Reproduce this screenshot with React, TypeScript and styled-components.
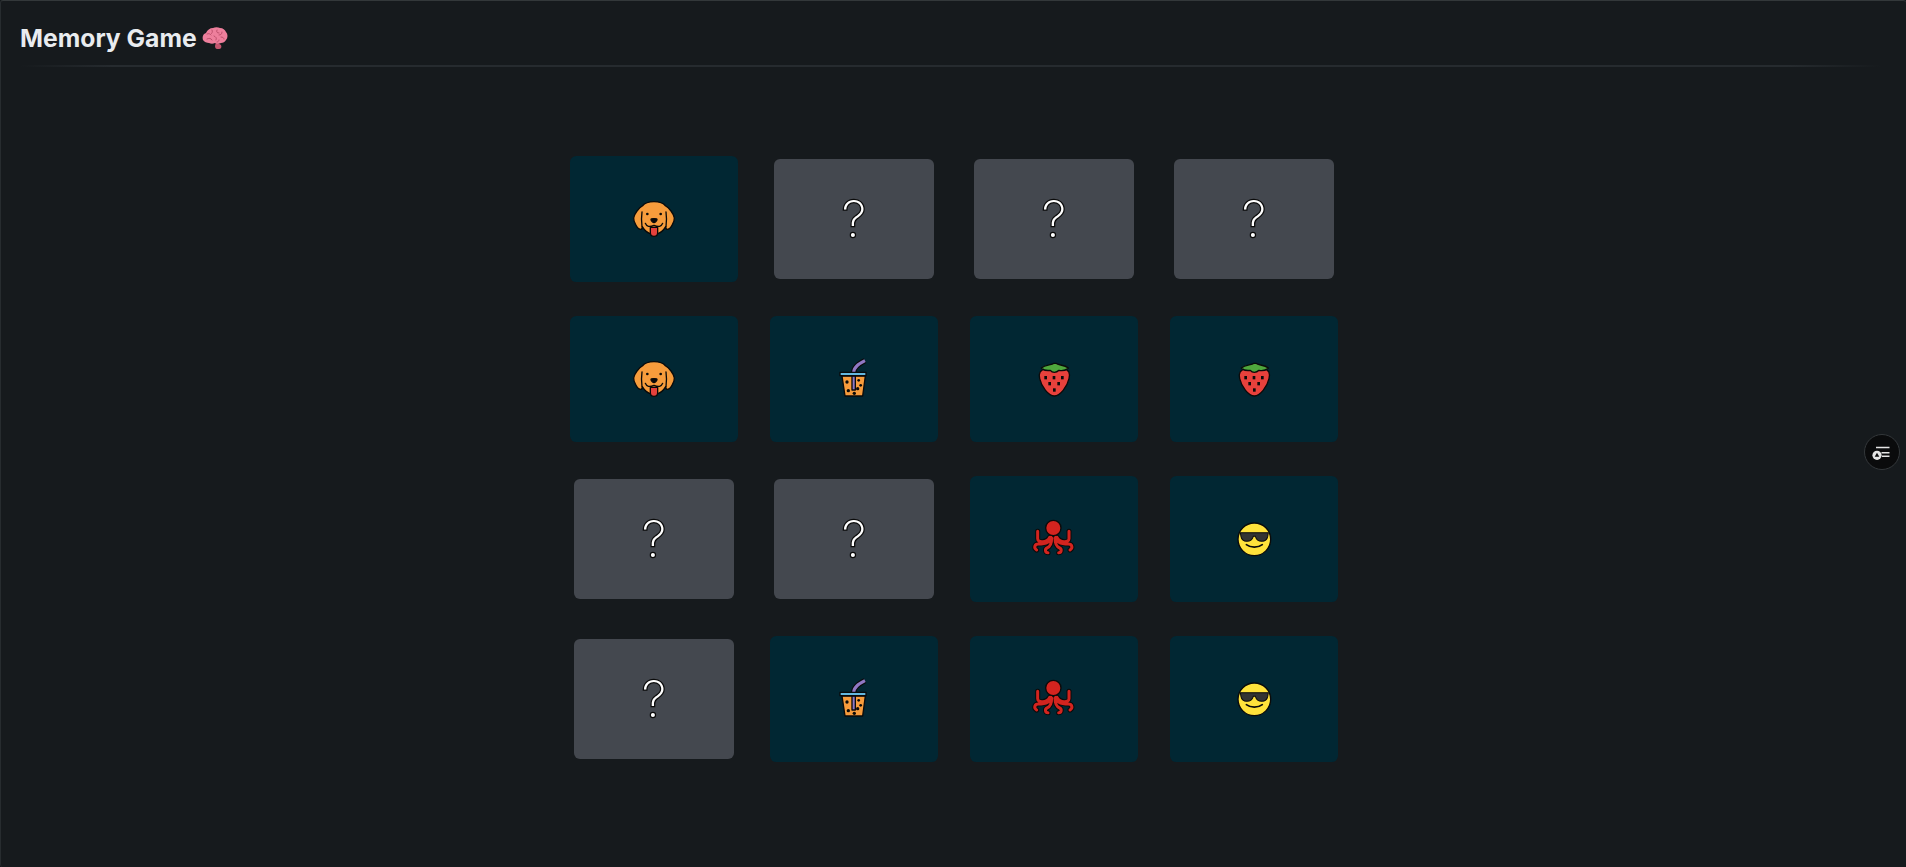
import React from 'react'
import styled, { createGlobalStyle } from 'styled-components'

const GlobalStyle = createGlobalStyle`
  html, body {
    margin: 0;
    padding: 0;
    background: #161a1d;
  }
`

const Page = styled.div`
  box-sizing: border-box;
  height: 867px;
  overflow: hidden;
  background: #161a1d;
  border-top: 1px solid #33383a;
  border-left: 1px solid #272c2f;
  border-radius: 3px;
  padding: 0 25px 0 19px;
  font-family: Inter, "Liberation Sans", sans-serif;
`

const Header = styled.div`
  display: flex;
  align-items: center;
  gap: 5px;
  height: 64px;
  padding-top: 9px;
  box-sizing: border-box;
`

const Title = styled.h1`
  margin: 0;
  font-size: 24.7px;
  line-height: 32px;
  font-weight: 700;
  color: #e9ecef;
`

const Divider = styled.div`
  height: 2px;
  background: linear-gradient(90deg, transparent 0, #262b2f 5%, #262b2f 95%, transparent 100%);
`

const Board = styled.div`
  display: grid;
  grid-template-columns: repeat(4, 160px);
  grid-auto-rows: 120px;
  gap: 40px;
  justify-content: center;
  margin: 92px 0 0 7px;
`

const Card = styled.div<{ $open: boolean }>`
  display: flex;
  align-items: center;
  justify-content: center;
  border-radius: 6px;
  background: ${p => (p.$open ? '#012733' : '#44484f')};
  transform: ${p => (p.$open ? 'scale(1.05)' : 'none')};
`

const Question = styled.span`
  font-size: 50px;
  line-height: 1;
  font-weight: 200;
  color: #fff;
  -webkit-text-stroke: 2.5px #0b0b0b;
  paint-order: stroke fill;
`

const IconBox = styled.svg`
  display: block;
  width: 60px;
  height: 60px;
  transform: scale(0.9524);
`

const FloatButton = styled.button`
  position: fixed;
  left: 1864px;
  top: 434px;
  width: 36px;
  height: 36px;
  padding: 0;
  display: flex;
  align-items: center;
  justify-content: center;
  border-radius: 50%;
  border: 1px solid #34383b;
  background: #0a0b0c;
`

const Dog = () => (
  <IconBox viewBox="12 -3 180 180">
    <g stroke="#0a0a0a" strokeWidth="4" strokeLinejoin="round" strokeLinecap="round">
      <path fill="#f79c3c" d="M102 35c-16 0-28 4-35 13-9 4-25 24-26 36-1 12 12 34 20 34 4 0 6-4 6-8 6 10 14 18 22 20h26c8-2 16-10 22-20 0 4 2 8 6 8 8 0 21-22 20-34-1-12-17-32-26-36-7-9-19-13-35-13z" />
      <path fill="none" d="M66 66c-2 14-2 30 0 44M138 66c2 14 2 30 0 44" />
      <path fill="none" d="M76 100c4 10 12 12 26 6 14 6 22 4 26-6" />
      <path fill="#e5413c" d="M91 112h22v16c0 7-5 11-11 11s-11-4-11-11z" />
      <path fill="#0a0a0a" d="M93 88c0-3 18-3 18 0 0 5-6 10-9 10s-9-5-9-10z" />
    </g>
    <circle cx="82" cy="72" r="4" fill="#0a0a0a" />
    <circle cx="122" cy="72" r="4" fill="#0a0a0a" />
  </IconBox>
)

const Cup = () => (
  <IconBox viewBox="-3 -3 180 180">
    <path fill="none" stroke="#0a0a0a" strokeWidth="16" d="M86 68c0-16 12-25 34-36" />
    <path fill="none" stroke="#8f78c4" strokeWidth="9" d="M86 68c0-16 12-25 34-36" />
    <g stroke="#0a0a0a" strokeWidth="4" strokeLinejoin="round">
      <path fill="#f79c3c" d="M51 78h70l-8 60H60z" />
      <path fill="#8f78c4" d="M81 78h10v42H81z" />
      <path fill="#62b8e0" d="M45 67h78v10H45z" />
    </g>
    <g fill="#0a0a0a">
      <circle cx="66" cy="96" r="5" /><circle cx="101" cy="91" r="4" />
      <circle cx="70" cy="122" r="5" /><circle cx="98" cy="116" r="5" />
      <circle cx="107" cy="106" r="4" /><circle cx="88" cy="130" r="5" />
    </g>
  </IconBox>
)

const Berry = () => (
  <IconBox viewBox="-3 -3 180 180">
    <path stroke="#0a0a0a" strokeWidth="4" fill="#e8413c" d="M62 58h54c16 0 20 12 16 28-5 24-27 52-44 52-17 0-39-28-44-52-4-16 2-28 18-28z" />
    <path stroke="#0a0a0a" strokeWidth="4" strokeLinejoin="round" fill="#4fa83d" d="M87 40c-8 6-26 4-38 14 8 8 20 8 27 7 3 4 8 6 12 6s10-2 14-6c6 1 20 1 28-7-12-10-30-8-37-14z" />
    <g fill="#0a0a0a">
      <rect x="58" y="78" width="8" height="10" /><rect x="83" y="78" width="8" height="10" /><rect x="108" y="78" width="8" height="10" />
      <rect x="70" y="96" width="8" height="10" /><rect x="97" y="96" width="8" height="10" />
      <rect x="84" y="115" width="8" height="10" />
    </g>
  </IconBox>
)

const tentacles = 'M38 64v22c0 14 28 12 36-4M132 64v22c0 14-28 12-36-4M78 82c-2 18-24 20-38 20-11 0-15 12-5 18M92 82c2 18 24 20 38 20 11 0 15 12 5 18M80 84c0 18-4 26-14 30-7 3-6 14 3 14M90 84c0 18 4 26 14 30 7 3 6 14-3 14'

const Octopus = () => (
  <IconBox viewBox="-3 -3 180 180">
    <g fill="none" strokeLinecap="round" strokeLinejoin="round">
      <path stroke="#0a0a0a" strokeWidth="15" d={tentacles} />
      <path stroke="#d3241f" strokeWidth="9" d={tentacles} />
    </g>
    <circle cx="85" cy="54" r="23" fill="#d3241f" stroke="#0a0a0a" strokeWidth="4" />
  </IconBox>
)

const Cool = () => (
  <IconBox viewBox="-3 -3 180 180">
    <circle cx="88" cy="88" r="49" fill="#ffe23b" stroke="#0a0a0a" strokeWidth="4" />
    <path fill="#333" stroke="#0a0a0a" strokeWidth="3" d="M46 68h84l-2 12c-2 10-8 14-18 14s-16-5-19-15h-6c-3 10-9 15-19 15s-16-4-18-14z" />
    <path fill="none" stroke="#0a0a0a" strokeWidth="5" strokeLinecap="round" d="M64 104c13 10 35 10 48 0" />
  </IconBox>
)

const Brain = () => (
  <svg width="26" height="22" viewBox="0 0 26 22" style={{ display: 'block' }}>
    <path fill="#c4566f" d="M14 15l5 3c1 2 0 4-2 4h-2c-1 0-2-1-2-3z" />
    <path fill="#ee7f9c" d="M1 13c-1-3 0-6 3-7 1-3 4-5 7-5 2-1 5-1 7 0 3 0 5 2 6 4 2 2 2 6 0 8-1 2-3 3-5 3-2 1-4 1-6 0-2 1-4 1-6 0-2 0-5-1-6-3z" />
    <path fill="none" stroke="#b84c68" strokeWidth="0.9" strokeLinecap="round" d="M5 7c2-1 3 0 4 1M10 3c1 2 0 3-1 4M15 3c-1 2 0 3 2 3M20 5c0 2-1 3-3 3M5 12c2-1 4-1 5 1M12 9c2 1 3 2 2 4M19 10c2 0 3 1 3 2M17 13c0 1-1 2-2 2" />
  </svg>
)

const Sliders = () => (
  <svg width="34" height="34" viewBox="1 1 34 34" style={{ flex: 'none' }}>
    <path stroke="#e6e6e6" strokeWidth="1.5" d="M12 13.500h13.500M17.500 18.700h8M18 22.300h7.500" />
    <circle cx="13" cy="21.300" r="4.600" fill="#e6e6e6" />
    <path fill="#0a0b0c" d="M13 18.800l2.300 4h-4.600z" />
  </svg>
)

const board = [
  [Dog, null, null, null],
  [Dog, Cup, Berry, Berry],
  [null, null, Octopus, Cool],
  [null, Cup, Octopus, Cool],
]

export default function App() {
  return (
    <Page>
      <GlobalStyle />
      <Header>
        <Title>Memory Game</Title>
        <Brain />
      </Header>
      <Divider />
      <Board>
        {board.flat().map((Icon, i) => (
          <Card key={i} $open={!!Icon}>
            {Icon ? <Icon /> : <Question>?</Question>}
          </Card>
        ))}
      </Board>
      <FloatButton aria-label="settings">
        <Sliders />
      </FloatButton>
    </Page>
  )
}
